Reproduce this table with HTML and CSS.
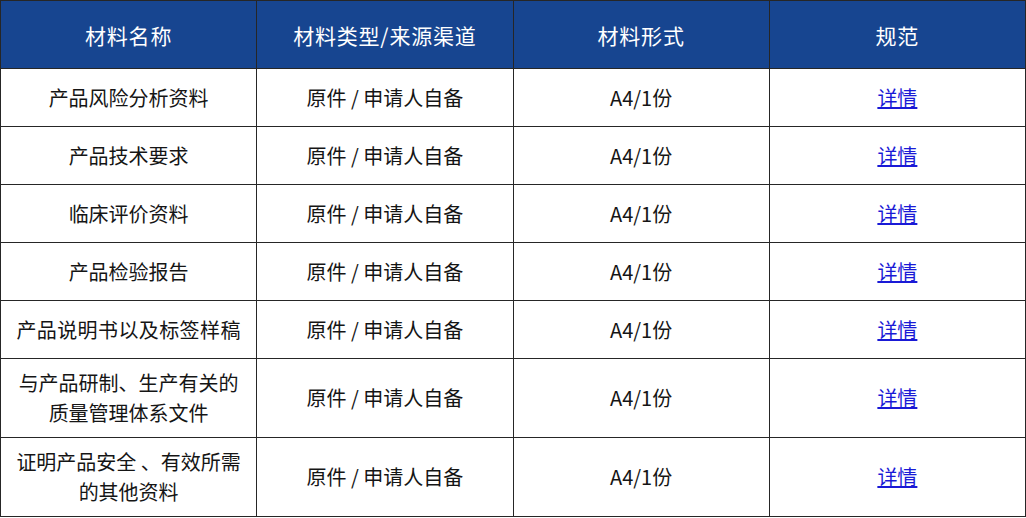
FILE: index.html
```html
<!DOCTYPE html>
<html lang="zh-CN">
<head>
<meta charset="utf-8">
<title>材料清单</title>
<link rel="stylesheet" href="styles.css">
</head>
<body>
<table class="materials">
  <colgroup>
    <col class="col"><col class="col"><col class="col"><col class="col">
  </colgroup>
  <thead>
    <tr class="head-row">
      <th>材料名称</th>
      <th>材料类型/来源渠道</th>
      <th>材料形式</th>
      <th>规范</th>
    </tr>
  </thead>
  <tbody>
    <tr class="row">
      <td>产品风险分析资料</td>
      <td>原件 / 申请人自备</td>
      <td>A4/1份</td>
      <td><a class="link" href="#">详情</a></td>
    </tr>
    <tr class="row">
      <td>产品技术要求</td>
      <td>原件 / 申请人自备</td>
      <td>A4/1份</td>
      <td><a class="link" href="#">详情</a></td>
    </tr>
    <tr class="row">
      <td>临床评价资料</td>
      <td>原件 / 申请人自备</td>
      <td>A4/1份</td>
      <td><a class="link" href="#">详情</a></td>
    </tr>
    <tr class="row">
      <td>产品检验报告</td>
      <td>原件 / 申请人自备</td>
      <td>A4/1份</td>
      <td><a class="link" href="#">详情</a></td>
    </tr>
    <tr class="row">
      <td class="spaced">产品说明书以及标签样稿</td>
      <td>原件 / 申请人自备</td>
      <td>A4/1份</td>
      <td><a class="link" href="#">详情</a></td>
    </tr>
    <tr class="row tall">
      <td>与产品研制、生产有关的<br>质量管理体系文件</td>
      <td>原件 / 申请人自备</td>
      <td>A4/1份</td>
      <td><a class="link" href="#">详情</a></td>
    </tr>
    <tr class="row tall">
      <td>证明产品安全 、有效所需<br>的其他资料</td>
      <td>原件 / 申请人自备</td>
      <td>A4/1份</td>
      <td><a class="link" href="#">详情</a></td>
    </tr>
  </tbody>
</table>
</body>
</html>
```
FILE: styles.css
```css
html, body {
  margin: 0;
  padding: 0;
  background: #ffffff;
}

body {
  font-family: "Noto Sans CJK SC", "Noto Sans", sans-serif;
  color: #151515;
}

.materials {
  width: 1026px;
  border-collapse: collapse;
  table-layout: fixed;
}

.col {
  width: 25%;
}

.materials th,
.materials td {
  border: 1px solid #262626;
  text-align: center;
  vertical-align: middle;
  padding: 0 4px;
}

.head-row {
  height: 68px;
}

.head-row th {
  background: #174590;
  color: #ffffff;
  font-size: 21px;
  font-weight: normal;
  letter-spacing: 0.8px;
}

.row {
  height: 58px;
}

.row.tall {
  height: 79px;
}

.row td {
  font-size: 20px;
  line-height: 30px;
}

.spaced {
  letter-spacing: 0.4px;
}

.link {
  color: #1a1ad6;
  text-decoration: underline;
}
```
